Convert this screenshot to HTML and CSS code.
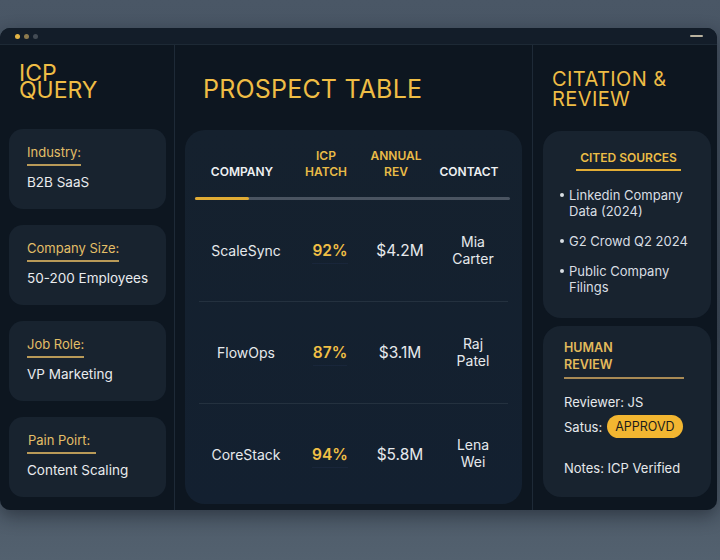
FILE: index.html
```html
<!DOCTYPE html>
<html lang="en">
<head>
  <meta charset="UTF-8">
  <meta name="viewport" content="width=device-width, initial-scale=1.0">
  <title>ICP Prospect Review</title>
  <link rel="stylesheet" href="styles.css">
</head>
<body>
  <div class="window">
    <!-- Title bar -->
    <div class="titlebar">
      <div class="dots">
        <span class="dot dot-1"></span>
        <span class="dot dot-2"></span>
        <span class="dot dot-3"></span>
      </div>
      <span class="dash"></span>
    </div>

    <div class="panes">
      <!-- ICP query -->
      <section class="col col-left">
        <h2 class="title title-left">ICP<br>QUERY</h2>
        <div class="query-cards">
          <div class="card query-card">
            <span class="label">Industry:</span>
            <div class="value">B2B SaaS</div>
          </div>
          <div class="card query-card">
            <span class="label">Company Size:</span>
            <div class="value">50-200 Employees</div>
          </div>
          <div class="card query-card">
            <span class="label">Job Role:</span>
            <div class="value">VP Marketing</div>
          </div>
          <div class="card query-card">
            <span class="label label-wide">Pain Poirt:</span>
            <div class="value">Content Scaling</div>
          </div>
        </div>
      </section>

      <!-- Prospect table -->
      <section class="col col-mid">
        <h2 class="title title-mid">PROSPECT TABLE</h2>
        <div class="card table-card">
          <div class="table-head">
            <div class="th">COMPANY</div>
            <div class="th th-gold">ICP<br>HATCH</div>
            <div class="th th-gold">ANNUAL<br>REV</div>
            <div class="th">CONTACT</div>
          </div>
          <div class="head-line"><span class="head-line-fill"></span></div>
          <div class="row">
            <div class="cell">ScaleSync</div>
            <div class="cell"><span class="pct">92%</span></div>
            <div class="cell rev">$4.2M</div>
            <div class="cell contact">Mia<br>Carter</div>
          </div>
          <div class="row">
            <div class="cell">FlowOps</div>
            <div class="cell"><span class="pct">87%</span></div>
            <div class="cell rev">$3.1M</div>
            <div class="cell contact">Raj<br>Patel</div>
          </div>
          <div class="row row-last">
            <div class="cell">CoreStack</div>
            <div class="cell"><span class="pct">94%</span></div>
            <div class="cell rev">$5.8M</div>
            <div class="cell contact">Lena<br>Wei</div>
          </div>
        </div>
      </section>

      <!-- Citation & review -->
      <section class="col col-right">
        <h2 class="title title-right">CITATION &amp;<br>REVIEW</h2>
        <div class="card sources-card">
          <div class="sources-head"><span>CITED SOURCES</span></div>
          <ul class="sources">
            <li>Linkedin Company<br>Data (2024)</li>
            <li>G2 Crowd Q2 2024</li>
            <li>Public Company<br>Filings</li>
          </ul>
        </div>
        <div class="card review-card">
          <div class="review-head">HUMAN<br>REVIEW</div>
          <div class="review-line">Reviewer: JS</div>
          <div class="review-status">Satus: <span class="badge">APPROVD</span></div>
          <div class="review-notes">Notes: ICP Verified</div>
        </div>
      </section>
    </div>
  </div>
</body>
</html>
```

FILE: styles.css
```css
body {
  margin: 0;
  padding: 28px 0 0 0;
  height: 560px;
  box-sizing: border-box;
  overflow: hidden;
  font-family: Inter, "Noto Sans", sans-serif;
  background: linear-gradient(180deg, #4a5766 0%, #3f4b59 60%, #53616f 100%);
  color: #e6e9ec;
}
.window {
  width: 717px;
  height: 482px;
  background-color: #0d1620;
  border-radius: 10px;
  overflow: hidden;
  display: flex;
  flex-direction: column;
  box-shadow: 0 6px 18px rgba(10, 16, 24, 0.45);
}
.titlebar {
  height: 16px;
  flex: none;
  background-color: #131d29;
  border-bottom: 1px solid #1d2935;
  display: flex;
  align-items: center;
  justify-content: space-between;
  padding: 0 14px 0 15px;
}
.dots {
  display: flex;
  gap: 4px;
}
.dot {
  width: 5px;
  height: 5px;
  border-radius: 50%;
}
.dot-1 { background-color: #e2b445; }
.dot-2 { background-color: #8c7a4e; }
.dot-3 { background-color: #434b54; }
.dash {
  width: 13px;
  height: 2px;
  background-color: #b9b29f;
  border-radius: 1px;
}
.panes {
  flex: 1;
  display: flex;
  min-height: 0;
}
.col {
  display: flex;
  flex-direction: column;
  box-sizing: border-box;
  min-width: 0;
}
.col-left {
  flex: none;
  width: 175px;
  border-right: 1px solid #1e2a37;
  padding: 20px 8px 14px 9px;
}
.col-mid {
  flex: none;
  width: 358px;
  border-right: 1px solid #1e2a37;
  padding: 29px 10px 8px 10px;
}
.col-right {
  flex: 1;
  padding: 24px 6px 13px 10px;
}
.title {
  margin: 0;
  color: #efbd45;
  font-weight: 400;
  white-space: nowrap;
}
.title-left {
  font-size: 23px;
  line-height: 17px;
  padding-left: 10px;
}
.title-mid {
  font-size: 25px;
  line-height: 30px;
  padding-left: 18px;
  letter-spacing: 0.2px;
}
.title-right {
  font-size: 20px;
  line-height: 20px;
  padding-left: 9px;
  letter-spacing: 0.4px;
}
.card {
  background-color: #18232f;
  box-sizing: border-box;
}

/* ICP query cards */
.query-cards {
  margin-top: 30px;
  display: flex;
  flex-direction: column;
  gap: 16px;
}
.query-card {
  height: 80px;
  border-radius: 14px;
  padding: 12px 10px 0 18px;
}
.label {
  display: inline-block;
  font-size: 13px;
  line-height: 16px;
  color: #e3bf67;
  padding-bottom: 4px;
  border-bottom: 2px solid #b99a58;
}
.label-wide {
  padding-right: 6px;
  padding-left: 1px;
}
.value {
  margin-top: 8px;
  font-size: 13.5px;
  line-height: 16px;
  color: #e9ebee;
}

/* Prospect table */
.table-card {
  margin-top: 26px;
  flex: 1;
  border-radius: 20px;
  background: linear-gradient(180deg, #15212e 0%, #132030 100%);
  padding: 0 12px 0 10px;
}
.table-head,
.row {
  display: grid;
  grid-template-columns: 94px 74px 66px 80px;
}
.table-head {
  align-items: end;
  padding: 18px 0 17px 0;
}
.th {
  text-align: center;
  font-size: 12px;
  line-height: 16px;
  font-weight: 600;
  color: #eef0f2;
}
.th-gold {
  color: #e9bb47;
}
.head-line {
  height: 3px;
  background-color: #4a5461;
  border-radius: 2px;
}
.head-line-fill {
  display: block;
  width: 54px;
  height: 3px;
  background-color: #e0ab34;
  border-radius: 2px;
}
.row {
  height: 101px;
  align-items: center;
  margin: 0 2px 0 4px;
  border-bottom: 1px solid #24313f;
}
.row-last {
  border-bottom: none;
  height: 100px;
}
.cell {
  text-align: center;
  font-size: 14px;
  color: #e6e9ec;
}
.pct {
  display: inline-block;
  font-size: 15.5px;
  font-weight: 600;
  color: #f0bf45;
  padding: 4px 0 3px 0;
  border-bottom: 1px solid #19263a;
}
.rev {
  font-size: 15.5px;
}
.contact {
  line-height: 17px;
  padding-bottom: 2px;
}

/* Citation & review */
.sources-card {
  margin-top: 22px;
  height: 187px;
  border-radius: 18px;
  padding: 15px 12px 0 16px;
}
.sources-head {
  text-align: center;
  margin-left: -1px;
}
.sources-head span {
  display: inline-block;
  font-size: 12px;
  line-height: 14px;
  font-weight: 600;
  color: #ecbd46;
  padding: 0 4px 4px 4px;
  border-bottom: 2px solid #e2ad35;
}
.sources {
  list-style: none;
  margin: 16px 0 0 0;
  padding: 0;
  display: flex;
  flex-direction: column;
  gap: 14px;
}
.sources li {
  position: relative;
  padding-left: 10px;
  font-size: 13px;
  line-height: 16px;
  color: #d9dee3;
}
.sources li::before {
  content: "";
  position: absolute;
  left: 1px;
  top: 6px;
  width: 4px;
  height: 4px;
  border-radius: 50%;
  background-color: #d9dee3;
}
.review-card {
  margin-top: 8px;
  flex: 1;
  border-radius: 18px;
  padding: 13px 27px 0 21px;
}
.review-head {
  font-size: 12.5px;
  line-height: 17px;
  font-weight: 600;
  color: #e3bb5c;
  padding-bottom: 4px;
  border-bottom: 2px solid #a88a55;
}
.review-line {
  margin-top: 15px;
  font-size: 13px;
  line-height: 16px;
}
.review-status {
  margin-top: 5px;
  font-size: 13px;
  display: flex;
  align-items: center;
  gap: 5px;
}
.badge {
  display: inline-block;
  height: 23px;
  line-height: 23px;
  padding: 0 8px;
  border-radius: 12px;
  background-color: #f2b631;
  color: #1b1b1b;
  font-size: 12.5px;
}
.review-notes {
  margin-top: 22px;
  font-size: 13px;
  line-height: 16px;
}
```
